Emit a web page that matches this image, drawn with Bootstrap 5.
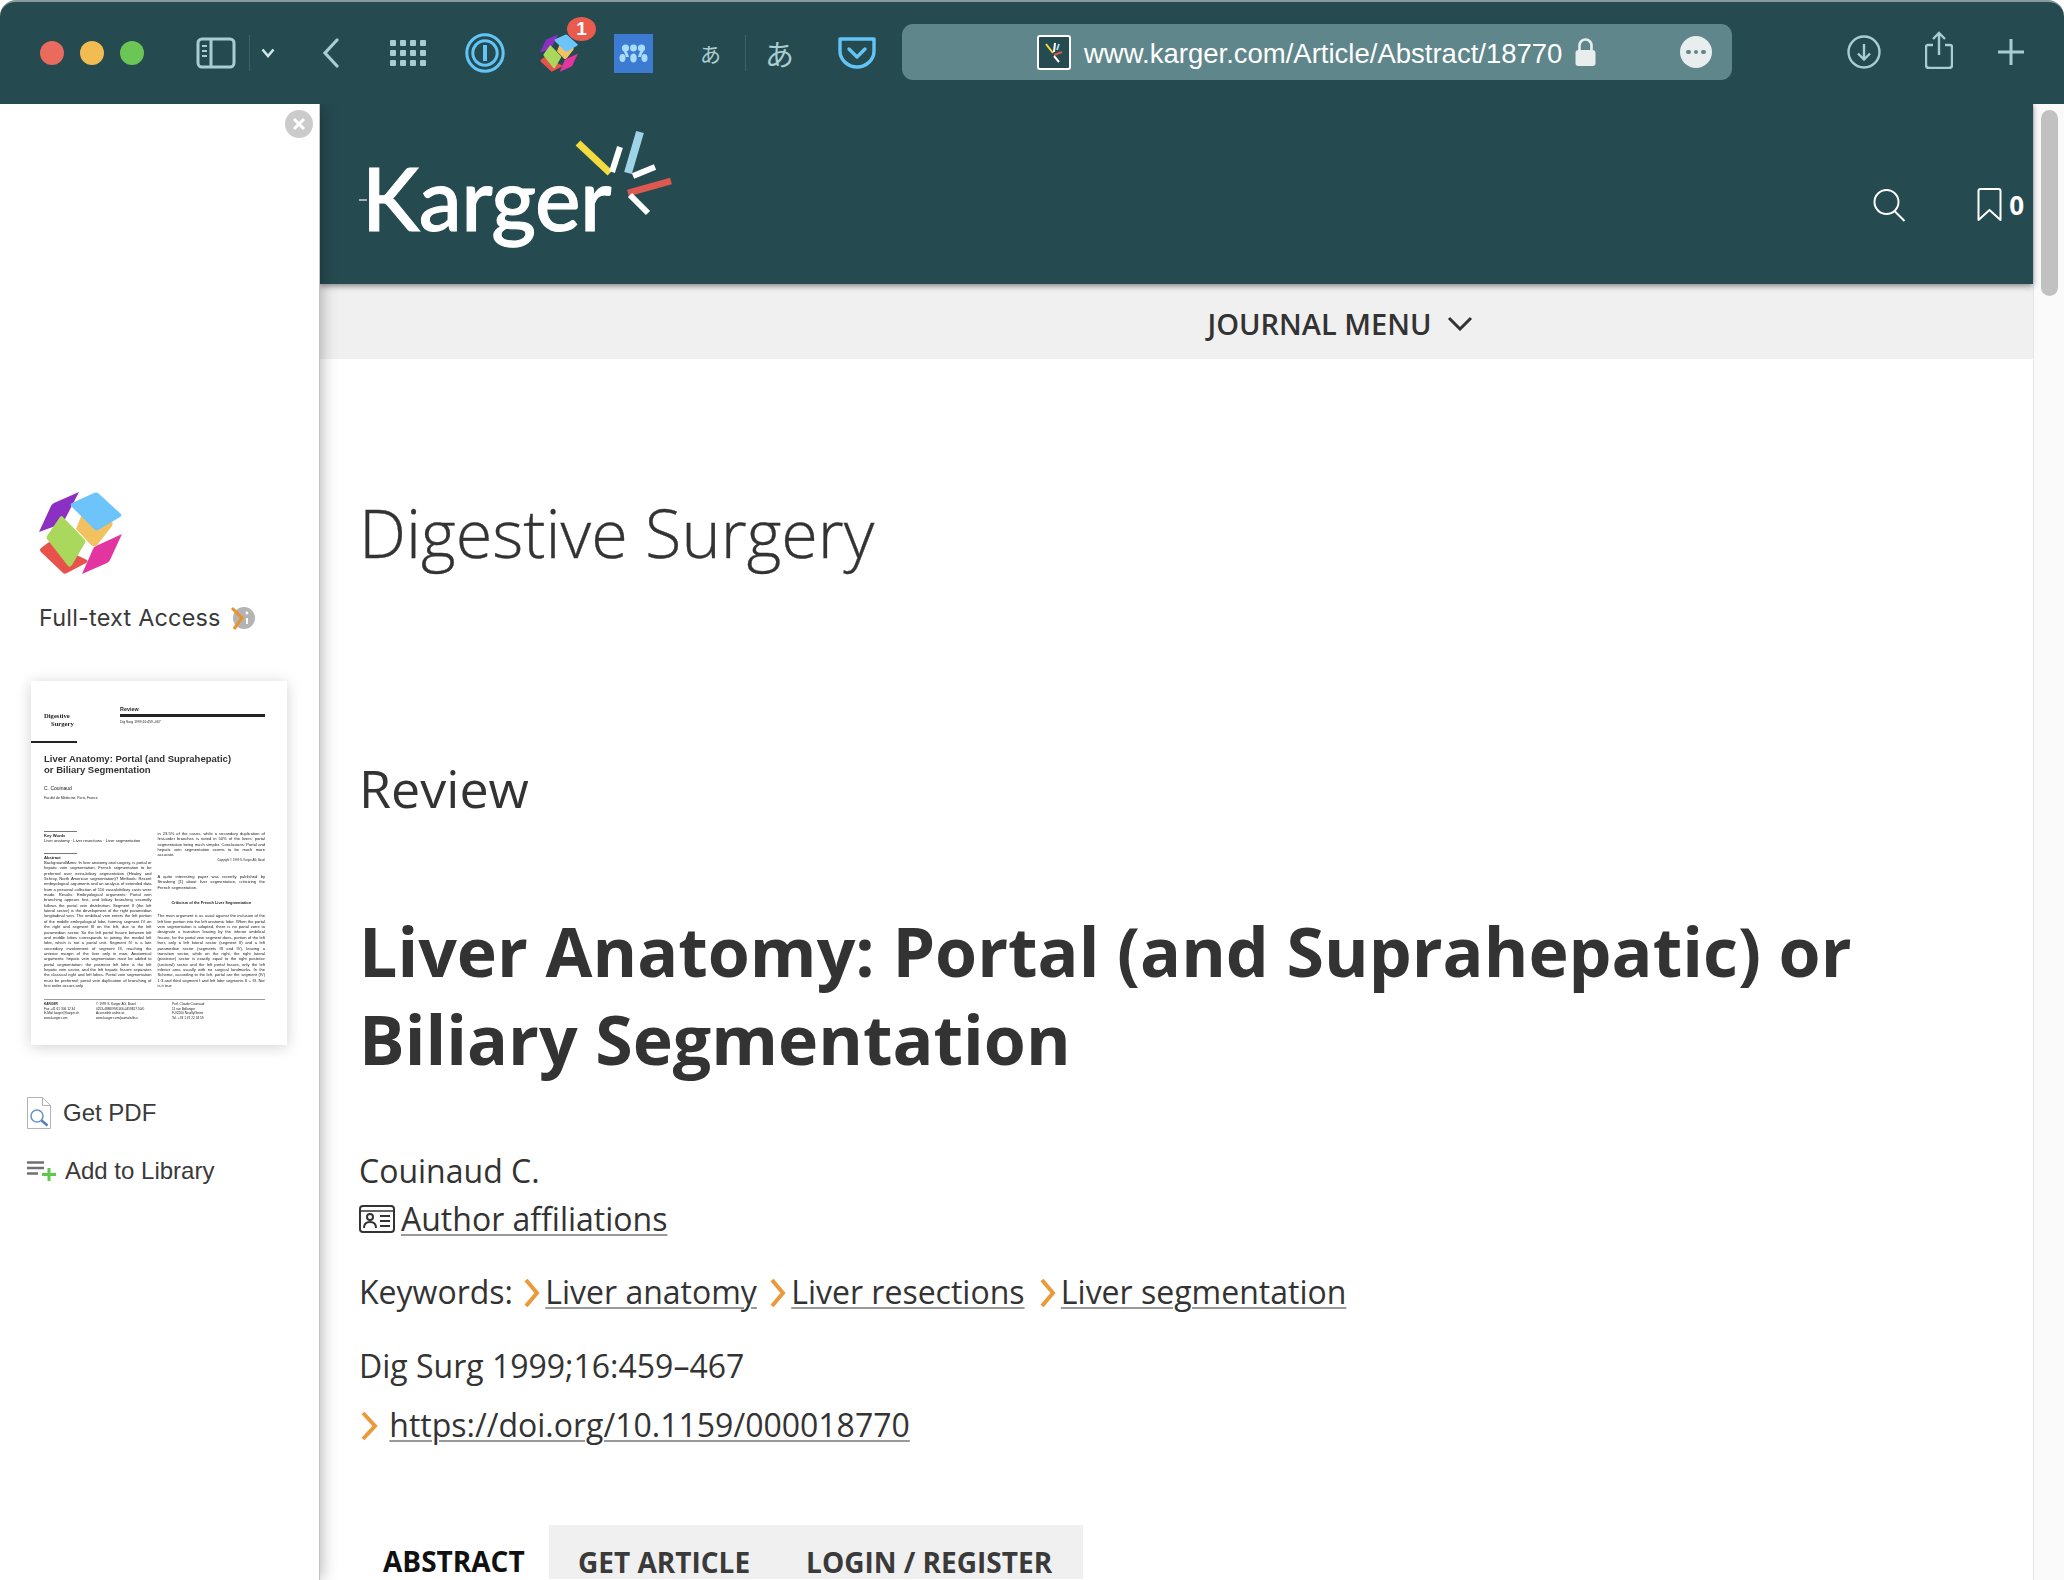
<!DOCTYPE html>
<html lang="en">
<head>
<meta charset="utf-8">
<title>Digestive Surgery - Karger</title>
<link href="https://cdn.jsdelivr.net/npm/bootstrap@5.3.0/dist/css/bootstrap.min.css" rel="stylesheet">
<style>
html,body{height:1580px;overflow:hidden;background:#fff}
body{font-family:"Open Sans","Liberation Sans",sans-serif;color:#333;width:2064px}
.tb{height:104px;background:#254a50;border-top:2px solid #8a9a9c;border-radius:16px 16px 0 0;color:#a9cdd1;flex:none;padding-left:40px}
.tb svg{display:block;flex:none}
.light{width:24px;height:24px;border-radius:50%;margin-right:16px}
.lr{background:#ea6a5d}.ly{background:#f3bc52}.lg{background:#6bc655}
.tb-sep{width:1px;height:36px;background:#3f6167;flex:none}
.ext-wrap{position:relative;width:38px;height:38px;flex:none}
.ext-badge{position:absolute;left:27px;top:-17px;width:29px;height:24px;border-radius:50%;background:#ea5b4d;color:#fff;font:700 19px/24px "Liberation Sans",sans-serif;text-align:center}
.kana{font-family:"Noto Sans CJK JP",sans-serif;color:#a9cdd1;flex:none;line-height:1}
.urlbar{position:absolute;left:902px;top:22px;width:830px;height:56px;background:#5f868b;border-radius:11px;color:#fff;font:27.5px/56px "Liberation Sans",sans-serif;padding-left:135px}
.url-txt{padding-top:3px}
.url-fav{width:34px;height:35px;background:#254a50;border:2px solid #fff;border-radius:3px;flex:none;margin-right:13px}
.url-dots{position:absolute;right:20px;top:12px;width:32px;height:32px;border-radius:50%;background:#e8eded;display:flex;gap:3px;align-items:center;justify-content:center}
.url-dots i{width:4.5px;height:4.5px;border-radius:50%;background:#5f868b;display:block}
.stage{height:1476px;overflow:hidden;flex:none}
.side{width:320px;flex:none;background:#fff;border-right:1px solid #c4c4c4;box-shadow:0 0 16px rgba(0,0,0,.35);position:relative;z-index:3;font-family:"Inter","Liberation Sans",sans-serif;padding:0 0 0 27px}
.side-close{position:absolute;left:285px;top:6px;width:28px;height:28px;border-radius:50%;background:#cbcbcb;display:flex;align-items:center;justify-content:center}
.side-logo{display:block;margin:388px 0 0 12px}
.ft{margin:27px 0 0 12px;font-size:23.4px;line-height:34px;color:#3a3a3a;letter-spacing:.22px;white-space:nowrap}
.thumb{width:256px;height:364px;margin:46px 0 0 4px;box-shadow:0 2px 14px rgba(0,0,0,.18);background:#fff;overflow:hidden;color:#222;font-family:"Liberation Sans",sans-serif;font-size:4.1px;line-height:5.35px;filter:blur(.25px)}
.t-head{padding:24px 22px 0 13px}
.t-jn{font:700 6.6px/7.8px "Liberation Serif",serif;width:76px;padding-top:7px;flex:none}
.t-jn span{display:block;padding-left:7px}
.t-rv{font-weight:700;font-size:5.4px;line-height:8px}
.t-bar{height:3px;background:#222;margin:1px 0 3px}
.t-dt{font-size:3.4px}
.t-cut{width:46px;height:2px;background:#222;margin:13px 0 10px}
.t-title{font-weight:700;font-size:9.5px;line-height:11.2px;padding:0 13px;color:#333;white-space:nowrap}
.t-au{padding:10px 13px 0;font-size:5px;line-height:7px}
.t-af{padding:3px 13px 0;font-size:3.4px;line-height:6px}
.t-cols{margin-top:30px;padding:0 22px 0 13px;gap:6px;height:165px;overflow:hidden}
.t-col{width:107.5px;flex:none;text-align:justify}
.t-rule{height:1px;background:#777;width:33px;margin-bottom:1px}
.t-lbl{font-weight:700}
.t-rule2{margin-top:9px}
.t-copy{font-size:2.8px;text-align:right}
.t-p{margin-top:11px}
.t-c-h{text-align:center;font-weight:700;font-size:3.9px;margin:10px 0 8px}
.t-foot{border-top:1px solid #999;margin:3px 22px 0 13px;padding-top:2px;font-size:3.2px;line-height:4.5px;gap:14px}
.t-f1{width:38px}
.t-f2{width:62px}
.t-fb{font-weight:700}
.side-link{color:#3a3a3a;font-family:"Liberation Sans",sans-serif;font-size:24px;line-height:32px;white-space:nowrap}
.sl1{margin-top:52px;gap:12px}
.sl2{margin-top:26px;gap:9px}
.main{width:1713px;flex:none;position:relative;min-width:0}
.m-head{height:180px;background:#254a50;box-shadow:0 2px 6px rgba(0,0,0,.45);position:relative;z-index:2;padding:0 9px 0 39px}
.brand-dash{width:8px;height:2px;background:#aab;margin:95px 0 0;flex:none}
.brand{font-family:"Lato",sans-serif;font-weight:500;font-size:86px;line-height:86px;color:#fff;letter-spacing:-.5px;margin-left:-5px;width:208px;padding-top:51px;white-space:nowrap;flex:none;-webkit-text-stroke:1px #fff}
.rays{display:block;margin-top:24px;flex:none}
.m-tools{margin-left:auto;margin-top:22px;height:158px;color:#fff}
.cnt{font-weight:700;font-size:26px;color:#fff;margin-left:7px;line-height:34px}
.jmenu{height:75px;background:#f0f0f0;font-weight:600;font-size:29px;color:#333;gap:16px;padding:4px 0 0 328px}
.cont{padding-left:39px}
.jname{font-weight:300;font-size:66.6px;line-height:80px;margin:134px 0 0;color:#333;-webkit-text-stroke:.35px #333}
.rvw{font-weight:400;font-size:52px;line-height:60px;margin:185px 0 0;color:#333}
.ttl{font-weight:700;font-size:68px;line-height:88px;margin:89px 0 0;color:#333}
.ln{font-size:32px;line-height:48px;white-space:nowrap}
.ln a{color:#333;text-decoration:underline;text-decoration-color:#999;text-underline-offset:3px;text-decoration-thickness:2px}
.l-au{margin-top:64px}
.l-kw{margin-top:25px}
.l-dg{margin-top:26px}
.l-do{margin-top:11px}
.chev{display:inline-block;vertical-align:-4px}
.chev-a{margin:0 4px 0 2px}
.chev-b{margin:0 4px 0 4px}
.chev-c{margin:0 4px 0 6px}
.tabs-x{margin:76px 0 0 0;height:54px;width:724px;flex-wrap:nowrap}
.tab-a{width:190px;font-weight:700;font-size:28px;color:#111;padding:19px 0 0 24px;line-height:34px;white-space:nowrap}
.tab-g{background:#f0f0f0;flex:1;font-weight:700;font-size:28px;color:#3a3a3a;padding:20px 0 0 29px;line-height:34px;gap:56px;white-space:nowrap}
.sbar{width:31px;flex:none;background:#fafafa;border-left:1px solid #e6e6e6;padding:6px 0 0 7px}
.sthumb{width:17px;height:186px;background:#c1c1c1;border-radius:9px}
</style>
</head>
<body>
<svg width="0" height="0" class="d-block position-absolute">
  <symbol id="mark" viewBox="39 492 83 82">
    <path fill="#f2c261" d="M82 514l27 6q5 1 3 6l-14 18q-3 4-7 1l-15-16z"/>
    <path fill="#e8524a" d="M41 548l8-6 38 18q1 2-1 3l-19 10q-3 2-5-1l-21-20q-2-2 0-4z"/>
    <path fill="#8b30c2" d="M39 532l12-26q1-2 3-3l25-11-15 29q-1 2-3 3z"/>
    <path fill="#6cc4fb" d="M94 493q2-1 4 0l23 21q1 2-1 3l-22 13q-2 1-4-1l-23-23q-1-2 1-3z"/>
    <path fill="#a9d85d" d="M60 517q2-2 3 0l22 23q1 2 0 3l-13 22q-2 3-4 1l-21-27q-1-2 0-3z"/>
    <path fill="#e3359f" d="M82 574l11-25q1-2 3-3l26-12-12 26q-1 2-3 3z"/>
  </symbol>
</svg>

<div class="tb d-flex align-items-center position-relative">
  <div class="light lr"></div><div class="light ly"></div><div class="light lg"></div>
  <svg style="margin-left:36px" width="40" height="32" viewBox="0 0 40 32" fill="none" stroke="#a9cdd1" stroke-width="3"><rect x="2" y="2" width="36" height="28" rx="4"/><path d="M15 2v28"/><path d="M6 9h5M6 14h5M6 19h5" stroke-width="2"/></svg>
  <div class="tb-sep" style="margin-left:13px"></div>
  <svg style="margin-left:11px" width="14" height="10" viewBox="0 0 14 10" fill="none" stroke="#cfe6e8" stroke-width="2.6"><path d="M1.5 1.5L7 8l5.5-6.5"/></svg>
  <svg style="margin-left:47px" width="18" height="30" viewBox="0 0 18 30" fill="none" stroke="#a9cdd1" stroke-width="3.2" stroke-linecap="round"><path d="M15 2L3 15l12 13"/></svg>
  <svg style="margin-left:50px" width="36" height="26" viewBox="0 0 36 26" fill="#a9cdd1"><rect x="0" y="0" width="6" height="6" rx="1"/><rect x="10" y="0" width="6" height="6" rx="1"/><rect x="20" y="0" width="6" height="6" rx="1"/><rect x="30" y="0" width="6" height="6" rx="1"/><rect x="0" y="10" width="6" height="6" rx="1"/><rect x="10" y="10" width="6" height="6" rx="1"/><rect x="20" y="10" width="6" height="6" rx="1"/><rect x="30" y="10" width="6" height="6" rx="1"/><rect x="0" y="20" width="6" height="6" rx="1"/><rect x="10" y="20" width="6" height="6" rx="1"/><rect x="20" y="20" width="6" height="6" rx="1"/><rect x="30" y="20" width="6" height="6" rx="1"/></svg>
  <svg style="margin-left:39px" width="40" height="40" viewBox="0 0 40 40" fill="none" stroke="#63c5f7"><circle cx="20" cy="20" r="18.2" stroke-width="3"/><circle cx="20" cy="20" r="12.2" stroke-width="3"/><path d="M20 12v16" stroke-width="4"/></svg>
  <div class="ext-wrap" style="margin-left:35px"><svg width="38" height="38"><use href="#mark"/></svg><div class="ext-badge">1</div></div>
  <svg style="margin-left:36px" width="39" height="39" viewBox="0 0 39 39"><rect width="39" height="39" fill="#3c7bd1"/><g fill="#a8dcf8"><circle cx="19.5" cy="14" r="3.4"/><circle cx="11.5" cy="14" r="3.6"/><circle cx="27.5" cy="14" r="3.6"/><ellipse cx="8.5" cy="24" rx="3" ry="4"/><ellipse cx="30.5" cy="24" rx="3" ry="4"/><ellipse cx="19.5" cy="24" rx="3.2" ry="4.5"/><path d="M9 16q4 0 5 4l1 3h-3l-1-3zM30 16q-4 0-5 4l-1 3h3l1-3z"/></g></svg>
  <span class="kana" style="font-size:21px;margin-left:47px">あ</span>
  <div class="tb-sep" style="margin-left:24px"></div>
  <span class="kana" style="font-size:29px;margin-left:19px">あ</span>
  <svg style="margin-left:44px" width="38" height="32" viewBox="0 0 38 32" fill="none" stroke="#63c5f7" stroke-width="3.4"><path d="M2 2h34v12c0 9-8 16-17 16S2 23 2 14z" stroke-linejoin="round"/><path d="M11 12l8 8 8-8" stroke-linecap="round" stroke-linejoin="round"/></svg>

  <div class="urlbar d-flex align-items-center">
    <div class="url-fav d-flex align-items-center justify-content-center">
      <svg width="20" height="24" viewBox="0 0 20 24" fill="none" stroke-width="2"><path d="M2 4l7 9" stroke="#f2df3e"/><path d="M11 3l-1 9" stroke="#fff"/><path d="M18 12l-8 3" stroke="#e0584f"/><path d="M10 16l5 6" stroke="#fff"/><path d="M15 4l-2 6" stroke="#9fd4e6"/></svg>
    </div>
    <span class="url-txt">www.karger.com/Article/Abstract/18770</span>
    <svg style="margin-left:13px" width="21" height="28" viewBox="0 0 21 28"><path d="M4.5 13V7.5a6 6 0 0 1 12 0V13" fill="none" stroke="#e8eded" stroke-width="2.6"/><rect x="0.5" y="12" width="20" height="16" rx="3" fill="#e8eded"/></svg>
    <div class="url-dots"><i></i><i></i><i></i></div>
  </div>
  <svg class="position-absolute" style="left:1847px;top:33px" width="34" height="34" viewBox="0 0 34 34" fill="none" stroke="#a9cdd1" stroke-width="2.4"><circle cx="17" cy="17" r="15.5"/><path d="M17 9v15M11 18.5l6 6 6-6"/></svg>
  <svg class="position-absolute" style="left:1925px;top:29px" width="28" height="38" viewBox="0 0 28 38" fill="none" stroke="#a9cdd1" stroke-width="2.4"><path d="M8 14H3q-2 0-2 2v18q0 3 3 3h20q3 0 3-3V16q0-2-2-2h-5"/><path d="M14 24V2M8 8l6-6 6 6"/></svg>
  <svg class="position-absolute" style="left:1998px;top:37px" width="26" height="26" viewBox="0 0 26 26" stroke="#a9cdd1" stroke-width="3"><path d="M13 0v26M0 13h26"/></svg>
</div>

<div class="stage d-flex">
  <aside class="side">
    <div class="side-close"><svg width="14" height="14" viewBox="0 0 14 14" stroke="#fff" stroke-width="3"><path d="M2 2l10 10M12 2L2 12"/></svg></div>
    <svg class="side-logo" width="83" height="82"><use href="#mark"/></svg>
    <div class="ft d-flex align-items-center"><span>Full-text Access</span>
      <svg style="margin-left:9px" width="26" height="26" viewBox="0 0 26 26"><circle cx="14" cy="13" r="11" fill="#b4b4b4"/><circle cx="17" cy="8" r="1.4" fill="#fff"/><path d="M17 13v6" stroke="#fff" stroke-width="2"/><path d="M2 3l10 10L4 24" fill="none" stroke="#e8922c" stroke-width="3"/></svg>
    </div>
    <div class="thumb">
      <div class="t-head d-flex">
        <div class="t-jn"><div>Digestive</div><span>Surgery</span></div>
        <div class="flex-grow-1"><div class="t-rv">Review</div><div class="t-bar"></div><div class="t-dt">Dig Surg 1999;16:459–467</div></div>
      </div>
      <div class="t-cut"></div>
      <div class="t-title"><div>Liver Anatomy: Portal (and Suprahepatic)</div><div>or Biliary Segmentation</div></div>
      <div class="t-au">C. Couinaud</div>
      <div class="t-af">Faculté de Médecine, Paris, France</div>
      <div class="t-cols d-flex">
        <div class="t-col">
          <div class="t-rule"></div>
          <div class="t-lbl">Key Words</div>
          <div>Liver anatomy · Liver resections · Liver segmentation</div>
          <div class="t-rule t-rule2"></div>
          <div class="t-lbl">Abstract</div>
          <div>Background/Aims: In liver anatomy and surgery, is portal or hepatic vein segmentation, French segmentation to be preferred over extra-biliary segmentation (Healey and Schroy, North American segmentation)? Methods: Recent embryological arguments and an analysis of extended data from a personal collection of 110 vasculobiliary casts were made. Results: Embryological arguments: Portal vein branching appears first, and biliary branching secondly follows the portal vein distribution. Segment II (the left lateral sector) is the development of the right paramedian longitudinal vein. The umbilical vein enters the left portion of the middle embryological lobe, forming segment IV on the right and segment III on the left, due to the left paramedian sector. So the left portal fissure between left and middle lobes corresponds to joining the medial left lobe, which is not a portal unit. Segment IV is a late secondary involvement of segment III, reaching the anterior margin of the liver only in man. Anatomical arguments: hepatic vein segmentation must be added to portal segmentation: the posterior left lobe is the left hepatic vein sector, and the left hepatic fissure separates the classical right and left lobes. Portal vein segmentation must be preferred; portal vein duplication of branching of first order occurs only</div>
        </div>
        <div class="t-col">
          <div>in 23.5% of the cases, while a secondary duplication of first-order branches is noted in 50% of the livers; portal segmentation being much simpler. Conclusions: Portal and hepatic vein segmentation seems to be much more accurate.</div>
          <div class="t-copy">Copyright © 1999 S. Karger AG, Basel</div>
          <div class="t-p">A quite interesting paper was recently published by Strasberg [1] about liver segmentation, criticizing the French segmentation.</div>
          <div class="t-c-h">Criticism of the French Liver Segmentation</div>
          <div>The main argument is as usual against the inclusion of the left liver portion into the left anatomic lobe. When the portal vein segmentation is adopted, there is no portal zone to designate a transition leaving by the inferior umbilical fissure, for the portal vein segment does, portion of the left liver, only a left lateral sector (segment II) and a left paramedian sector (segments III and IV), leaving a transition sector, while on the right, the right lateral (posterior) sector is exactly equal to the right posterior (sectoral) sector and the left portal fissure, only the left inferior area usually with no surgical landmarks. In the Scheme, according to the left, portal are the segment (IV) 1:3 and third segment I and left lobe segments II + III. Nor is it true</div>
        </div>
      </div>
      <div class="t-foot d-flex">
        <div class="t-f1"><div class="t-fb">KARGER</div><div>Fax +41 61 306 12 34</div><div>E-Mail karger@karger.ch</div><div>www.karger.com</div></div>
        <div class="t-f2"><div>© 1999 S. Karger AG, Basel</div><div>0253-4886/99/0166-0459$17.50/0</div><div>Accessible online at:</div><div>www.karger.com/journals/dsu</div></div>
        <div><div>Prof. Claude Couinaud</div><div>11 rue Bellanger</div><div>F-92200 Neuilly/Seine</div><div>Tel. +33 1 47 22 34 59</div></div>
      </div>
    </div>
    <div class="side-link sl1 d-flex align-items-center">
      <svg width="24" height="32" viewBox="0 0 24 32" fill="none"><path d="M.5.5h15l8 8v23H.5z" stroke="#b3b3b3"/><path d="M15.5.5v8h8" stroke="#b3b3b3"/><circle cx="10" cy="19" r="6" stroke="#6a97c9" stroke-width="1.6"/><path d="M14.5 23.5l6 5" stroke="#4f7fb5" stroke-width="2.4"/></svg>
      <span>Get PDF</span>
    </div>
    <div class="side-link sl2 d-flex align-items-center">
      <svg width="29" height="20" viewBox="0 0 29 20"><path d="M0 1.5h17M0 7h17M0 12.500h11" stroke="#707070" stroke-width="2.400"/><path d="M15 13.500h14M22 7v13" stroke="#5cc94b" stroke-width="3"/></svg>
      <span>Add to Library</span>
    </div>
  </aside>

  <main class="main">
    <div class="m-head d-flex">
      <div class="brand-dash"></div>
      <div class="brand">Karger</div>
      <svg class="rays" width="104" height="90" viewBox="570 128 104 90" fill="none"><path d="M578 143l32 30" stroke="#f3dc3f" stroke-width="7"/><path d="M620 147l-8 25" stroke="#fff" stroke-width="6"/><path d="M640 132l-12 41" stroke="#9fd4e6" stroke-width="8"/><path d="M655 167l-22 9" stroke="#fff" stroke-width="6"/><path d="M671 181l-43 12" stroke="#dc5850" stroke-width="7"/><path d="M648 213l-18-18" stroke="#fff" stroke-width="6"/></svg>
      <div class="m-tools d-flex align-items-center">
        <svg width="34" height="33" viewBox="0 0 34 33" fill="none" stroke="#fff" stroke-width="2"><circle cx="13.500" cy="13" r="12"/><path d="M21.500 22l10 10"/></svg>
        <svg style="margin-left:70px" width="25" height="34" viewBox="0 0 25 34" fill="none" stroke="#fff" stroke-width="2"><path d="M1.500 32V3q0-2 2-2h18q2 0 2 2v29L12.500 22z" stroke-linejoin="round"/></svg>
        <span class="cnt">0</span>
      </div>
    </div>
    <div class="jmenu d-flex align-items-center justify-content-center">
      <span>JOURNAL MENU</span>
      <svg width="26" height="15" viewBox="0 0 26 15" fill="none" stroke="#333" stroke-width="3"><path d="M2 2l11 11L24 2"/></svg>
    </div>
    <div class="cont">
      <div class="jname">Digestive Surgery</div>
      <div class="rvw">Review</div>
      <h1 class="ttl">Liver Anatomy: Portal (and Suprahepatic) or<br>Biliary Segmentation</h1>
      <div class="ln l-au">Couinaud C.</div>
      <div class="ln d-flex align-items-center">
        <svg style="margin-right:6px" width="36" height="28" viewBox="0 0 36 28" fill="none" stroke="#333" stroke-width="2"><rect x="1" y="1" width="34" height="26" rx="3"/><path d="M1 6h34" stroke-width="1.500"/><circle cx="11" cy="12" r="3"/><path d="M5 23q0-6 6-6t6 6M21 11h10M21 16h10M21 21h10"/></svg>
        <a href="#">Author affiliations</a>
      </div>
      <div class="ln l-kw">Keywords:
        <svg class="chev chev-a" width="18" height="30" viewBox="0 0 18 30" fill="none" stroke="#ea9a3a" stroke-width="4"><path d="M3 2l11 13L3 28"/></svg><a href="#">Liver anatomy</a>
        <svg class="chev chev-b" width="18" height="30" viewBox="0 0 18 30" fill="none" stroke="#ea9a3a" stroke-width="4"><path d="M3 2l11 13L3 28"/></svg><a href="#">Liver resections</a>
        <svg class="chev chev-c" width="18" height="30" viewBox="0 0 18 30" fill="none" stroke="#ea9a3a" stroke-width="4"><path d="M3 2l11 13L3 28"/></svg><a href="#">Liver segmentation</a>
      </div>
      <div class="ln l-dg">Dig Surg 1999;16:459–467</div>
      <div class="ln l-do">
        <svg class="chev" style="margin-right:2px" width="20" height="30" viewBox="0 0 20 30" fill="none" stroke="#ea9a3a" stroke-width="4"><path d="M4 2l12 13L4 28"/></svg>
        <a href="#">https://doi.org/10.1159/000018770</a>
      </div>
      <div class="nav tabs-x">
        <div class="tab-a">ABSTRACT</div>
        <div class="tab-g d-flex"><span>GET ARTICLE</span><span>LOGIN / REGISTER</span></div>
      </div>
    </div>
  </main>
  <div class="sbar"><div class="sthumb"></div></div>
</div>
</body>
</html>
